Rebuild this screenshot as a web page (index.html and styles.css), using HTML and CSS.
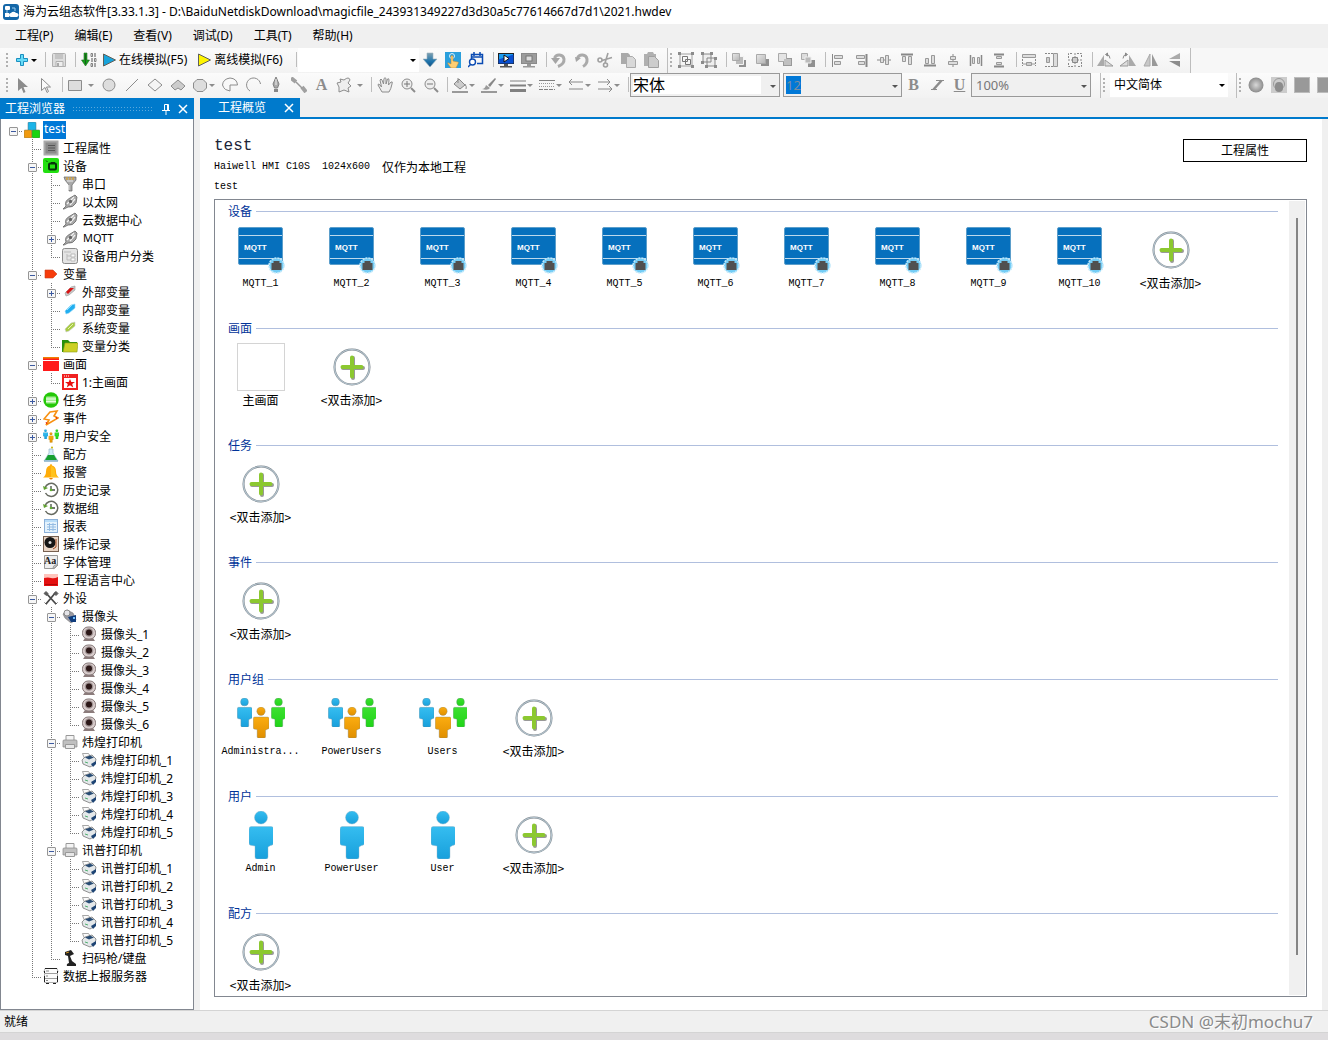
FILE: index.html
```html
<!DOCTYPE html>
<html lang="zh-CN">
<head>
<meta charset="utf-8">
<title>海为云组态软件</title>
<link rel="stylesheet" href="styles.css">
</head>
<body>
<svg class="defs" aria-hidden="true">
<defs>
<linearGradient id="gBlue" x1="0" y1="0" x2="0" y2="1"><stop offset="0" stop-color="#35bdf0"/><stop offset="1" stop-color="#18a0dc"/></linearGradient>
<linearGradient id="gGreen" x1="0" y1="0" x2="0" y2="1"><stop offset="0" stop-color="#3ce030"/><stop offset="1" stop-color="#20d418"/></linearGradient>
<linearGradient id="gOrange" x1="0" y1="0" x2="0" y2="1"><stop offset="0" stop-color="#fbac10"/><stop offset="1" stop-color="#e08f00"/></linearGradient>
<linearGradient id="gGray" x1="0" y1="0" x2="1" y2="1"><stop offset="0" stop-color="#e8e8e8"/><stop offset="1" stop-color="#b4b4b4"/></linearGradient>
<linearGradient id="gDown" x1="0" y1="0" x2="0" y2="1"><stop offset="0" stop-color="#7fa0b0"/><stop offset=".6" stop-color="#1e74ac"/><stop offset="1" stop-color="#124e80"/></linearGradient>
<radialGradient id="gBall"><stop offset="0" stop-color="#d8d8d8"/><stop offset="1" stop-color="#8c8c8c"/></radialGradient>
</defs>
<symbol id="app" viewBox="0 0 16 16"><rect width="16" height="16" rx="3" fill="#1467a8"/><rect x="2" y="2" width="5" height="4" rx="1" fill="#fff"/><rect x="2" y="9" width="4" height="4" fill="#fff"/><path d="M9 4h3v3M4 6v3M6 11h3" stroke="#9fd0f0" fill="none"/><path d="M8 13a2 2 0 0 1 0-4 3 3 0 0 1 5 0 2 2 0 0 1 1 4z" fill="#fff"/></symbol>
<symbol id="caret" viewBox="0 0 8 8"><path d="M1 3h6L4 6z" fill="currentColor"/></symbol>
<symbol id="plus" viewBox="0 0 16 16"><path d="M6.500 2.500h3v4h4v3h-4v4h-3v-4h-4v-3h4z" fill="#67dcf8" stroke="#1b8fc0"/></symbol>
<symbol id="save" viewBox="0 0 16 16"><path d="M2.500 1.500h11a1 1 0 0 1 1 1v12h-13v-12a1 1 0 0 1 1-1z" fill="#ddd" stroke="#b0b0b0"/><path d="M4 2h8v5H4z" fill="#c4c4c4"/><path d="M5 9.500h7v5H5z" fill="#eee" stroke="#b0b0b0"/><path d="M6 11h2v3H6z" fill="#aaa"/></symbol>
<symbol id="compile" viewBox="0 0 16 16"><path d="M3 1h3v7h2.500l-4 6-4-6H3z" fill="#13a019" stroke="#226b22" stroke-width=".6"/><path d="M4.500 2v10" stroke="#1d5a20"/><path d="M10 1.500h1.500v3H10zM10 11.500h1.500v3H10zM13.500 6.500H15v3h-1.500z" fill="none" stroke="#666" stroke-width=".8"/><path d="M14 1v4M14 11v4M11 6v4" stroke="#555"/></symbol>
<symbol id="playB" viewBox="0 0 16 16"><path d="M2.500 2l12 6-12 6z" fill="#18a4dc" stroke="#60605a"/></symbol>
<symbol id="playY" viewBox="0 0 16 16"><path d="M2.500 2l12 6-12 6z" fill="#fff500" stroke="#60605a"/></symbol>
<symbol id="down" viewBox="0 0 16 16"><path d="M5 1h6v6h4l-7 8-7-8h4z" fill="url(#gDown)" stroke="#9ab4c0" stroke-width=".6"/></symbol>
<symbol id="touch" viewBox="0 0 16 16"><rect width="16" height="16" fill="#2a9fdc"/><circle cx="7" cy="4" r="2.500" fill="none" stroke="#d7f0ff"/><path d="M6 4q1-1 2 0v5l5 1q1 0 0 2l-2 4H6l-3-4q-1-2 1-1l2 1z" fill="#ffcf73" stroke="#b88230" stroke-width=".5"/></symbol>
<symbol id="find" viewBox="0 0 16 16"><path d="M3.500 9V2.500h11v9H9M3.500 5h11M6 0v4M12 0v4" fill="none" stroke="#0b4bb3" stroke-width="1.500"/><circle cx="4.500" cy="10" r="3" fill="#fff" stroke="#0b4bb3" stroke-width="1.400"/><path d="M2.500 12.500L0 15" stroke="#0b4bb3" stroke-width="1.500"/></symbol>
<symbol id="monOn" viewBox="0 0 16 16"><rect x=".5" y="1.500" width="15" height="10" fill="#1b9cf2" stroke="#222"/><path d="M.5 11.500v-4l15-5v9z" fill="#0a4fd0"/><path d="M6 3l5 3.500L6 10z" fill="#fff" stroke="#111"/><path d="M6 12h4v2h4v1.500H2V14h4z" fill="#555"/></symbol>
<symbol id="monOff" viewBox="0 0 16 16"><rect x=".5" y="1.500" width="15" height="10" fill="#9c9c9c" stroke="#8a8a8a"/><rect x="5" y="4" width="6" height="5" fill="#ddd" stroke="#777"/><path d="M6 12h4v2h4v1.500H2V14h4z" fill="#999"/></symbol>
<symbol id="undo" viewBox="0 0 16 16"><path d="M7 14.500Q13.500 12 13 7A5 5 0 0 0 3.500 6" fill="none" stroke="#aaa" stroke-width="3"/><path d="M0 6h9l-4.500 6z" fill="#a5a5a5"/></symbol>
<symbol id="redo" viewBox="0 0 16 16"><path d="M9 14.500Q13.500 12 13 7A5 5 0 0 0 3.500 6" fill="none" stroke="#aaa" stroke-width="3"/><path d="M1 5l6 1-5 4z" fill="#a5a5a5"/></symbol>
<symbol id="cut" viewBox="0 0 16 16"><g fill="none" stroke="#a0a0a0" stroke-width="1.600"><circle cx="3" cy="8" r="2"/><circle cx="8.500" cy="13" r="2"/><path d="M5 8.500l10-3M8 11l3-10"/></g></symbol>
<symbol id="copy" viewBox="0 0 16 16"><path d="M1 1h7l2 2v9H1z" fill="#aaa"/><path d="M6.500 4.500h6l3 3v8h-9z" fill="#d8d8d8" stroke="#aaa"/></symbol>
<symbol id="paste" viewBox="0 0 16 16"><path d="M1 2h3l1-2h5l1 2h2v12H1z" fill="#b0b0b0"/><path d="M5.500 4.500h6l4 4v7h-10z" fill="#ccc" stroke="#a0a0a0"/></symbol>
<symbol id="group" viewBox="0 0 16 16"><path d="M2 2h12v12H2z" fill="none" stroke="#a0a0a0"/><path d="M4.500 4.500h5v5h-5zM7.500 7.500h5v5h-5z" fill="none" stroke="#777"/><path d="M0 0h3v3H0zM13 0h3v3h-3zM0 13h3v3H0zM13 13h3v3h-3z" fill="#8c8c8c"/></symbol>
<symbol id="ungroup" viewBox="0 0 16 16"><path d="M2 2h8v8H2zM6 6h8v8H6z" fill="#eee" stroke="#888"/><path d="M0 0h3v3H0zM9 0h3v3H9zM0 9h3v3H0zM13 5h3v3h-3zM4 13h3v3H4zM13 13h3v3h-3z" fill="#8c8c8c"/></symbol>
<symbol id="layA" viewBox="0 0 16 16"><path d="M8 8h7v7H8z" fill="#909090"/><path d="M4.500 4.500h8v8h-8z" fill="#bbb" stroke="#f4f4f4"/><path d="M1.500 1.500h7v7h-7z" fill="url(#gGray)" stroke="#aaa"/></symbol>
<symbol id="layB" viewBox="0 0 16 16"><path d="M7 7h8v7H7z" fill="#909090"/><path d="M2.500 2.500h9v9h-9z" fill="url(#gGray)" stroke="#aaa"/></symbol>
<symbol id="layC" viewBox="0 0 16 16"><path d="M6 6h9v8H6z" fill="#999"/><path d="M1.500 1.500h8v8h-8z" fill="#e4e4e4" stroke="#aaa"/><path d="M7 7h7v6H7z" fill="#c0c0c0"/></symbol>
<symbol id="layD" viewBox="0 0 16 16"><path d="M1.500 1.500h6v6h-6z" fill="#ddd" stroke="#aaa"/><path d="M8 8h7v7H8z" fill="#909090"/><path d="M5 5h6v6H5z" fill="#bbb" stroke="#eee"/></symbol>
<symbol id="alL" viewBox="0 0 16 16"><path d="M2.500 2v13" stroke="#888"/><path d="M4.500 3.500h8v3h-8zM4.500 9.500h6v3h-6z" fill="#ddd" stroke="#999"/></symbol>
<symbol id="alR" viewBox="0 0 16 16"><path d="M13.500 2v13" stroke="#888" stroke-width="2"/><path d="M3.500 3.500h8v3h-8zM5.500 9.500h6v3h-6z" fill="#ddd" stroke="#999"/></symbol>
<symbol id="alC" viewBox="0 0 16 16"><path d="M1 8h14" stroke="#888"/><path d="M4.500 5.500h3v5h-3zM9.500 3.500h3v9h-3z" fill="#ddd" stroke="#999"/></symbol>
<symbol id="alT" viewBox="0 0 16 16"><path d="M2 2.500h12" stroke="#888" stroke-width="2"/><path d="M3.500 4.500h3v5h-3zM9.500 4.500h3v8h-3z" fill="#ddd" stroke="#999"/></symbol>
<symbol id="alB" viewBox="0 0 16 16"><path d="M2 13.500h12" stroke="#888" stroke-width="2"/><path d="M3.500 6.500h3v5h-3zM9.500 3.500h3v8h-3z" fill="#ddd" stroke="#999"/></symbol>
<symbol id="alM" viewBox="0 0 16 16"><path d="M8 2v13" stroke="#888"/><path d="M5.500 4.500h5v3h-5zM3.500 9.500h9v3h-9z" fill="#ddd" stroke="#999"/></symbol>
<symbol id="spH" viewBox="0 0 16 16"><path d="M2.500 3v11M13.500 3v11" stroke="#888" stroke-width="1.500"/><path d="M4.500 5.500h2v6h-2zM9.500 5.500h2v6h-2z" fill="#ddd" stroke="#999"/></symbol>
<symbol id="spV" viewBox="0 0 16 16"><path d="M3 2.500h10M3 14.500h10" stroke="#888" stroke-width="2"/><path d="M5.500 4.500h5v2h-5zM5.500 10.500h5v2h-5z" fill="#ddd" stroke="#999"/></symbol>
<symbol id="szW" viewBox="0 0 16 16"><path d="M1.500 2.500h13v3h-13z" fill="#ddd" stroke="#999"/><path d="M1.500 7v7M14.500 7v7" stroke="#888" stroke-dasharray="2 1"/><path d="M5.500 10.500h5v3h-5zM2 12h3M11 12h3" fill="#ccc" stroke="#999"/></symbol>
<symbol id="szH" viewBox="0 0 16 16"><path d="M9.500 1.500h4v13h-4z" fill="#ddd" stroke="#999"/><path d="M1 1.500h8M1 14.500h8" stroke="#888" stroke-dasharray="2 1"/><path d="M2.500 5.500h3v5h-3z" fill="#ccc" stroke="#999"/></symbol>
<symbol id="szB" viewBox="0 0 16 16"><path d="M1.500 6V1.500H6M10 1.500h4.500V6M14.500 10v4.500H10M6 14.500H1.500V10M8 1v14M1 8h14" fill="none" stroke="#888" stroke-dasharray="2 1"/><path d="M5.500 5.500h5v5h-5z" fill="#ccc" stroke="#888"/></symbol>
<symbol id="rotL" viewBox="0 0 16 16"><path d="M0 14L7 3v11z" fill="#aaa"/><path d="M8 14V8l8 6z" fill="#ddd" stroke="#999"/><path d="M9 2.500q4 0 4 4M8.500 2.500l2-1.500v3z" fill="none" stroke="#888"/></symbol>
<symbol id="rotR" viewBox="0 0 16 16"><path d="M16 14L9 3v11z" fill="#aaa"/><path d="M8 14V8l-8 6z" fill="#ddd" stroke="#999"/><path d="M7 2.500q-4 0-4 4M7.500 2.500l-2-1.500v3z" fill="none" stroke="#888"/></symbol>
<symbol id="flipH" viewBox="0 0 16 16"><path d="M1 14L7 2v12z" fill="#c8c8c8" stroke="#aaa"/><path d="M15 14L9 2v12z" fill="#999"/></symbol>
<symbol id="flipV" viewBox="0 0 16 16"><path d="M14 1L3 7h11z" fill="#aaa"/><path d="M14 15L3 9h11z" fill="#8c8c8c"/></symbol>
<symbol id="curF" viewBox="0 0 16 16"><path d="M3 1v13l3.500-3 2 5 2-1-2-5H13z" fill="#8c8c8c"/></symbol>
<symbol id="curO" viewBox="0 0 16 16"><path d="M3.500 1.500v12L7 10.500l2 5 1.500-1-2-4.500h4z" fill="#fafafa" stroke="#8c8c8c"/></symbol>
<symbol id="rect" viewBox="0 0 16 16"><path d="M1.500 3.500h13v10h-13z" fill="#ddd" stroke="#8c8c8c"/></symbol>
<symbol id="circ" viewBox="0 0 16 16"><circle cx="8" cy="8" r="6" fill="#ddd" stroke="#8c8c8c"/></symbol>
<symbol id="line" viewBox="0 0 16 16"><path d="M2 14L14 2" stroke="#8c8c8c"/></symbol>
<symbol id="dia" viewBox="0 0 16 16"><path d="M1 8l7-6 7 6-7 6z" fill="#f4f4f4" stroke="#8c8c8c"/></symbol>
<symbol id="diaF" viewBox="0 0 16 16"><path d="M1 9l7-6 7 6-4 4-3-2-3 2z" fill="#ccc" stroke="#8c8c8c"/></symbol>
<symbol id="oct" viewBox="0 0 16 16"><path d="M5 2.500h6l3.500 3.500v5L11 14.500H5L1.500 11V6z" fill="#ddd" stroke="#8c8c8c"/></symbol>
<symbol id="pie" viewBox="0 0 16 16"><path d="M8 8h7.500Q15 1.500 8 1 1 2 .5 8q1 3 3 4.500L8 14z" fill="#f8f8f8" stroke="#8c8c8c"/></symbol>
<symbol id="arc" viewBox="0 0 16 16"><path d="M5 14A7 7 0 1 1 15.500 7" fill="none" stroke="#8c8c8c"/></symbol>
<symbol id="pen" viewBox="0 0 16 16"><path d="M8 0l3 7-1.500 4h-3L5 7z" fill="#aaa" stroke="#808080"/><path d="M6 12h4v3H6z" fill="#888"/><path d="M8 2v6" stroke="#eee"/></symbol>
<symbol id="pipe" viewBox="0 0 16 16"><path d="M0 1l5 4M11 10l4 5" stroke="#a0a0a0" stroke-width="4"/><path d="M5 5l6 6" stroke="#999" stroke-width="1.500"/></symbol>
<symbol id="star" viewBox="0 0 16 16"><path d="M8 3q5-4 6 0l-2 3 3 3-3 2 1 4-5-2-5 2v-5L1 6l4-1-1-3z" fill="#eee" stroke="#8c8c8c"/></symbol>
<symbol id="hand" viewBox="0 0 16 16"><path d="M5 15L1 8q0-2 2 0l1.500 2L3 3q1-2 2 0l1.500 4L7 1.500q1-1.500 2 0V7l1.500-5q1.500-1 1.500 1l-.5 5L14 5q2-1 1 2-1 5-3 8z" fill="#eee" stroke="#8c8c8c"/></symbol>
<symbol id="zin" viewBox="0 0 16 16"><circle cx="7" cy="7" r="5" fill="#eee" stroke="#8c8c8c"/><path d="M4 7h6M7 4v6" stroke="#777"/><path d="M11 11l4 4" stroke="#8c8c8c" stroke-width="2"/></symbol>
<symbol id="zout" viewBox="0 0 16 16"><circle cx="7" cy="7" r="5" fill="#eee" stroke="#8c8c8c"/><path d="M4 7h6" stroke="#777"/><path d="M11 11l4 4" stroke="#8c8c8c" stroke-width="2"/></symbol>
<symbol id="fill" viewBox="0 0 16 16"><path d="M2 7l5-5 6 6-5 4z" fill="#ccc" stroke="#888"/><path d="M6 6V1M13 7q2 3 1 5" stroke="#888" fill="none"/><path d="M0 14h16v2H0z" fill="#999"/></symbol>
<symbol id="brush" viewBox="0 0 16 16"><path d="M1 12q3 0 4-4l4 3q-2 3-8 1z" fill="#999"/><path d="M7 8l7-7 1 1-6 8z" fill="#888"/><path d="M0 14h16v2H0z" fill="#999"/></symbol>
<symbol id="lw" viewBox="0 0 16 16"><path d="M0 4h16" stroke="#808080"/><path d="M0 8.500h16" stroke="#808080" stroke-width="2"/><path d="M0 13.500h16" stroke="#808080" stroke-width="3"/></symbol>
<symbol id="ld" viewBox="0 0 16 16"><path d="M0 3.500h16" stroke="#808080"/><path d="M0 6.500h16M0 9.500h16" stroke="#999" stroke-dasharray="1 1"/><path d="M0 12.500h16" stroke="#808080" stroke-dasharray="4 1"/></symbol>
<symbol id="arL" viewBox="0 0 16 16"><path d="M1 5h14M4 2L1 5l3 3M1 12h14" fill="none" stroke="#888"/></symbol>
<symbol id="arR" viewBox="0 0 16 16"><path d="M1 5h12M10 2l3 3-3 3M1 12h14M12 9l3 3-3 3" fill="none" stroke="#888"/></symbol>
<symbol id="ital" viewBox="0 0 16 16"><path d="M7 3.500h8M2 12.500h6" stroke="#8c8c8c"/><path d="M12.500 3.500l-8 9" stroke="#8c8c8c" stroke-width="2.500"/></symbol>
<symbol id="ball" viewBox="0 0 16 16"><circle cx="8" cy="8" r="7.500" fill="url(#gBall)"/></symbol>
<symbol id="cam" viewBox="0 0 16 16"><rect width="16" height="16" fill="#ccc"/><circle cx="8" cy="7" r="5.500" fill="#ccc" stroke="#999"/><rect x="4" y="5" width="8" height="10" rx="4" fill="#8c8c8c"/></symbol>
<symbol id="sq" viewBox="0 0 16 16"><rect x=".5" y=".5" width="15" height="15" fill="#999" stroke="#bbb"/></symbol>
<symbol id="pin" viewBox="0 0 10 12"><path d="M3.500 7V1.500h4V7M1 7.500h8M5 8v4M6.500 1v6" fill="none" stroke="#fff"/></symbol>
<symbol id="x" viewBox="0 0 10 10"><path d="M1 1l8 8M9 1L1 9" stroke="currentColor" stroke-width="1.500"/></symbol>
<symbol id="root" viewBox="0 0 16 16"><rect x="4" width="8" height="9" rx="1" fill="#1cb4e8" stroke="#55707c" stroke-width=".5"/><rect y="8" width="8" height="8" rx="1" fill="#f09a10" stroke="#775" stroke-width=".5"/><rect x="8" y="8" width="8" height="8" rx="1" fill="#18d410" stroke="#575" stroke-width=".5"/></symbol>
<symbol id="attr" viewBox="0 0 16 16"><rect x="1.500" y="1.500" width="13" height="13" fill="#8a8a8a" stroke="#aaa" stroke-width="2"/><path d="M5 5.500h7M5 8h7M5 10.500h7" stroke="#555"/></symbol>
<symbol id="dev" viewBox="0 0 16 16"><rect width="16" height="15" rx="2" fill="#22e010"/><rect x="6" y="5.500" width="7" height="6" rx="1" fill="none" stroke="#05330a" stroke-width="2"/><path d="M3 2.500l1.500 1.500M8 4.500h4" stroke="#05330a" fill="none"/></symbol>
<symbol id="serial" viewBox="0 0 16 16"><path d="M2 1h12v3l-4 5v6H7V9L3 4z" fill="#aaa" stroke="#666" stroke-width=".7"/><path d="M5 1v3M8 1v3M11 1v3" stroke="#d0a040" stroke-width="1.500"/><path d="M5 5h6M7 9v5" stroke="#eee"/></symbol>
<symbol id="plug" viewBox="0 0 16 16"><path d="M1 15l3-3Q2 7 8 4l5-3 2 2-1 6q-3 5-8 4l-4 2z" fill="#a8a8a8" stroke="#666" stroke-width=".8"/><path d="M5 10l7-7M8 11l5-6" stroke="#f4f4f4" stroke-width="1.200"/><circle cx="8.500" cy="7.500" r="1.700" fill="#666"/></symbol>
<symbol id="cls" viewBox="0 0 16 16"><rect x=".5" y=".5" width="15" height="15" rx="2" fill="#e4e4e4" stroke="#8a8a8a"/><path d="M2 4h7M5 6v6h4M5 8h4" stroke="#bbb" fill="none"/><path d="M9 6h4v3H9zM9 10h4v3H9z" fill="#fafafa" stroke="#bbb"/></symbol>
<symbol id="tagR" viewBox="0 0 16 16"><path d="M2 4h8l4 4-4 4H2z" fill="#f63c0c" stroke="#c84020" stroke-width=".6"/></symbol>
<symbol id="vR" viewBox="0 0 16 16"><path d="M3 9l6-6 4-1v4l-6 5-3 1z" fill="#c8c8c8" stroke="#999" stroke-width=".6"/><path d="M4 8l4-4 4 0-6 6z" fill="#d81414"/></symbol>
<symbol id="vB" viewBox="0 0 16 16"><path d="M3 9l6-6 4-1v4l-6 5-3 1z" fill="#22aef0" stroke="#8fd8f8" stroke-width=".6"/><path d="M5 8l5-5" stroke="#8fe0ff"/></symbol>
<symbol id="vG" viewBox="0 0 16 16"><path d="M3 9l6-6 4-1v4l-6 5-3 1z" fill="#a8cc44" stroke="#ccc" stroke-width=".6"/><path d="M6 9l5-5" stroke="#e8f0b0"/></symbol>
<symbol id="folder" viewBox="0 0 16 16"><path d="M0 2h6l2 2h7v10H0z" fill="#28900a"/><path d="M3 5h13l-1 9H1z" fill="#ccd024" stroke="#8ea018" stroke-width=".6"/></symbol>
<symbol id="scr" viewBox="0 0 16 16"><path d="M0 1h16v14H0z" fill="#ff1a1a"/><path d="M0 1h16v1.500H0z" fill="#f08000"/><path d="M0 4.500h16" stroke="#fff"/></symbol>
<symbol id="scrS" viewBox="0 0 16 16"><path d="M1 1h14v14H1z" fill="#fff" stroke="#f02020" stroke-width="2"/><path d="M0 0h16v4H0z" fill="#f02020"/><path d="M2 2h5" stroke="#fff" stroke-dasharray="1 1"/><path d="M8 5l1.300 3H13l-2.800 2 1 3.500L8 11.300l-3.200 2.200 1-3.500L3 8h3.700z" fill="#e81010"/></symbol>
<symbol id="task" viewBox="0 0 16 16"><circle cx="8" cy="8" r="7.700" fill="#24c808"/><rect x="3" y="4.500" width="10" height="7" rx="1" fill="#a8ec98"/><path d="M3 7h10M3 9.500h10" stroke="#e8ffe0"/></symbol>
<symbol id="event" viewBox="0 0 16 16"><path d="M7 2l7-1-3 5 4 2L3 15l3-5-5-1z" fill="#fff" stroke="#f89010" stroke-width="1.600"/><path d="M13 7l1 2M3 12l1 2" stroke="#e02010"/></symbol>
<symbol id="person" viewBox="0 0 24 48"><circle cx="12" cy="6.500" r="6.500"/><path d="M2 15.500h20a2.500 2.500 0 0 1 2.500 2.500v14q0 2-3 2.500L19 36v10q0 2-2 2H8q-2 0-2-2V35l-3-.5q-3 0-3-2.500V18q0-2.500 2-2.500z"/></symbol>
<symbol id="users" viewBox="0 0 48 48"><g stroke="#6d7d84" stroke-width=".5"><use href="#person" x="0" y="4" width="15" height="29" fill="url(#gBlue)"/><use href="#person" x="34" y="4" width="15" height="29" fill="url(#gGreen)"/><use href="#person" x="16" y="13" width="16" height="31" fill="url(#gOrange)"/></g></symbol>
<symbol id="user" viewBox="0 0 48 48"><use href="#person" x="12" y="0" width="24" height="48" fill="url(#gBlue)" stroke="#8fb4c4" stroke-width=".4"/></symbol>
<symbol id="recipe" viewBox="0 0 16 16"><path d="M6 3h4v4l5 8H1l5-8z" fill="#d4ecf8" stroke="#9ab8c8" stroke-width=".7"/><path d="M5 9h6l3 5H2z" fill="#18a030"/><circle cx="9" cy="1.500" r="1" fill="#c8b400"/><path d="M1 15h14" stroke="#6aa0c0"/></symbol>
<symbol id="bell" viewBox="0 0 16 16"><path d="M8 0q1 0 1 1.500 4 1 4 6 0 4 3 6H0q3-2 3-6 0-5 4-6Q7 0 8 0z" fill="#ffac08"/><path d="M8 2q4 1 4 6 0 4 3 5H8z" fill="#ffc21c"/><path d="M6 14h4q-2 3-4 0z" fill="#e88000"/></symbol>
<symbol id="hist" viewBox="0 0 16 16"><path d="M2 6a6.500 6.500 0 1 1 .5 5" fill="none" stroke="#666a60" stroke-width="1.500"/><path d="M0 4l1 4 4-2z" fill="#60a030"/><path d="M8 4v4h4" fill="none" stroke="#445040" stroke-width="1.300"/><circle cx="8" cy="8" r="1.300" fill="#60b030"/></symbol>
<symbol id="report" viewBox="0 0 16 16"><rect x="1.500" y="1.500" width="13" height="13" fill="#e4f2fc" stroke="#8cb0d8"/><path d="M2 3h12" stroke="#b8dcf8" stroke-width="2"/><path d="M4 6.500h9M4 9h9M4 11.500h9M6.500 5v8M10 5v8" stroke="#94bce4"/></symbol>
<symbol id="oplog" viewBox="0 0 16 16"><rect x=".5" y=".5" width="15" height="15" fill="#e8d4c4" stroke="#776050"/><circle cx="7" cy="6.500" r="5.500" fill="#151515"/><circle cx="7" cy="6.500" r="1.500" fill="#ddd"/><path d="M13 3v8l-3 2" stroke="#a04820" fill="none"/></symbol>
<symbol id="font" viewBox="0 0 16 16"><path d="M1.500 1.500h13v10l-3 3h-10z" fill="#eee" stroke="#999"/><path d="M15 11q-5-1-5 4z" fill="#ccc" stroke="#999"/></symbol>
<symbol id="lang" viewBox="0 0 16 16"><path d="M1 2h14v5H1z" fill="#ffc4bc"/><path d="M1 6q4-1 7 0t7-1v9H1z" fill="#e41010"/><path d="M2 12.500h12" stroke="#b00808"/></symbol>
<symbol id="tools" viewBox="0 0 16 16"><path d="M3 3l10 11M13 2L3 14" stroke="#4a4a4a" stroke-width="1.800"/><path d="M1 3.500l2-2 2 2-1.500 2zM11 3.500l2-2 2 2-2 2zM1.500 12.500l2 2M14.500 12.500l-2 2" fill="#5c5c5c" stroke="#5c5c5c"/></symbol>
<symbol id="camera" viewBox="0 0 16 16"><path d="M1 6l4-4 6 3 3 7-5 3-6-5z" fill="#9c9ca4" stroke="#777" stroke-width=".6"/><circle cx="5" cy="5" r="3" fill="#e4e4e8" stroke="#888"/><path d="M6 9l8-2v7H9z" fill="#103c7c"/><path d="M11 9h2v2h-2z" fill="#70c0ff"/></symbol>
<symbol id="webcam" viewBox="0 0 16 16"><path d="M4 12h8l2 3H2z" fill="#8c7c7c"/><rect x="1.500" y="1" width="13" height="12" rx="5.500" fill="#d8cccc" stroke="#857878"/><circle cx="8" cy="6.500" r="4.300" fill="#a09494"/><circle cx="8" cy="6.500" r="3" fill="#2c1818"/></symbol>
<symbol id="prn" viewBox="0 0 16 16"><path d="M4 6V1.500h8V6" fill="#f4f4f4" stroke="#999"/><path d="M1 7q0-1 1-1h12q1 0 1 1v6H1z" fill="#c0c0c0" stroke="#888" stroke-width=".7"/><path d="M3.500 10.500h9v4h-9z" fill="#e8e8e8" stroke="#999"/></symbol>
<symbol id="prn2" viewBox="0 0 16 16"><path d="M1.500 1.500h6l2 3-6 2z" fill="#fafafa" stroke="#909090" stroke-width=".8"/><path d="M1 8l3-3 7-2 4 4-1 5-5 3-7-3z" fill="#e4e8ea" stroke="#777" stroke-width=".8"/><path d="M4 5.500l5-2 4 2-5 2z" fill="#284c74"/><path d="M10 12l5-3v3l-3 3z" fill="#1e4474"/><path d="M4 10l3 1" stroke="#50b070"/></symbol>
<symbol id="scan" viewBox="0 0 16 16"><path d="M3 2l6-2 3 4-4 2 2 5 4 3v2H5q-1-2 2-3L6 6 3 5z" fill="#222"/><path d="M4 3l3-1" stroke="#cc9020"/></symbol>
<symbol id="server" viewBox="0 0 16 16"><path d="M2 .5h12l1 3-1 2H2l-1-2zM1.500 5.500h13v5h-13zM1.500 10.500h13v4h-13z" fill="#fbfbfb" stroke="#999" stroke-width=".8"/><path d="M2 .5h12M1.500 3v2M14.500 3v2M1.500 8v6M14.500 8v6M3 15.500h3M10 15.500h3" stroke="#222"/><path d="M3 3h3M3 8h2M3 12.500h2" stroke="#888"/></symbol>
<symbol id="add" viewBox="0 0 48 48"><circle cx="24" cy="24" r="17.500" fill="#fff" stroke="#7c858c" stroke-width="2"/><circle cx="24" cy="24" r="17.500" fill="none" stroke="#b4c4ce" stroke-width="1.200"/><path d="M25 15v20M15 25h20" stroke="#999" stroke-width="4" stroke-linecap="round"/><path d="M24 14.500v19M14.500 24h19" stroke="#8cc830" stroke-width="4" stroke-linecap="round"/></symbol>
<symbol id="mqtt" viewBox="0 0 48 48"><rect x="1.500" y="1.500" width="44" height="37" rx="1.500" fill="#0670bd" stroke="#5b9ecb"/><path d="M2 9.500h43M2 32.500h43" stroke="#bcd9ec"/><circle cx="39.500" cy="39.500" r="7.500" fill="#74cdf6" stroke="#c0e8fa" stroke-width="1.500" stroke-dasharray="2 1"/><path d="M34.500 44v-7h2v-2h6v2h2v7z" fill="#505050"/></symbol>
</svg>

<header class="title"><svg class="i"><use href="#app"/></svg><span>海为云组态软件[3.33.1.3] - D:\BaiduNetdiskDownload\magicfile_243931349227d3d30a5c77614667d7d1\2021.hwdev</span></header>
<nav class="menu"><button>工程(P)</button><button>编辑(E)</button><button>查看(V)</button><button>调试(D)</button><button>工具(T)</button><button>帮助(H)</button></nav>

<div class="bars">
<div class="bar">
<div class="group"><i class="grip"></i>
<button class="tb drop" aria-label="新建"><svg class="i"><use href="#plus"/></svg><svg class="c"><use href="#caret"/></svg></button><i class="sep"></i>
<button class="tb" aria-label="保存"><svg class="i"><use href="#save"/></svg></button><i class="sep"></i>
<button class="tb" aria-label="编译"><svg class="i"><use href="#compile"/></svg></button>
<button class="tb wide"><svg class="i"><use href="#playB"/></svg>在线模拟(F5)</button>
<button class="tb wide"><svg class="i"><use href="#playY"/></svg>离线模拟(F6)</button><i class="sep"></i>
<div class="combo flat device"><select aria-label="设备"><option></option></select><svg class="c"><use href="#caret"/></svg></div>
<button class="tb" aria-label="下载"><svg class="i"><use href="#down"/></svg></button>
<button class="tb" aria-label="触摸"><svg class="i"><use href="#touch"/></svg></button>
<button class="tb" aria-label="查找"><svg class="i"><use href="#find"/></svg></button><i class="sep"></i>
<button class="tb" aria-label="运行"><svg class="i"><use href="#monOn"/></svg></button>
<button class="tb" aria-label="停止"><svg class="i"><use href="#monOff"/></svg></button><i class="sep"></i>
<button class="tb" aria-label="撤销"><svg class="i"><use href="#undo"/></svg></button>
<button class="tb" aria-label="重做"><svg class="i"><use href="#redo"/></svg></button>
<button class="tb" aria-label="剪切"><svg class="i"><use href="#cut"/></svg></button>
<button class="tb" aria-label="复制"><svg class="i"><use href="#copy"/></svg></button>
<button class="tb" aria-label="粘贴"><svg class="i"><use href="#paste"/></svg></button></div>
<div class="group"><i class="grip"></i>
<button class="tb" aria-label="组合"><svg class="i"><use href="#group"/></svg></button>
<button class="tb" aria-label="取消组合"><svg class="i"><use href="#ungroup"/></svg></button><i class="sep"></i>
<button class="tb" aria-label="置顶"><svg class="i"><use href="#layA"/></svg></button>
<button class="tb" aria-label="置底"><svg class="i"><use href="#layB"/></svg></button>
<button class="tb" aria-label="上移"><svg class="i"><use href="#layC"/></svg></button>
<button class="tb" aria-label="下移"><svg class="i"><use href="#layD"/></svg></button><i class="sep"></i>
<button class="tb" aria-label="左对齐"><svg class="i"><use href="#alL"/></svg></button>
<button class="tb" aria-label="右对齐"><svg class="i"><use href="#alR"/></svg></button>
<button class="tb" aria-label="水平居中"><svg class="i"><use href="#alC"/></svg></button>
<button class="tb" aria-label="上对齐"><svg class="i"><use href="#alT"/></svg></button>
<button class="tb" aria-label="下对齐"><svg class="i"><use href="#alB"/></svg></button>
<button class="tb" aria-label="垂直居中"><svg class="i"><use href="#alM"/></svg></button>
<button class="tb" aria-label="横向分布"><svg class="i"><use href="#spH"/></svg></button>
<button class="tb" aria-label="纵向分布"><svg class="i"><use href="#spV"/></svg></button><i class="sep"></i>
<button class="tb" aria-label="等宽"><svg class="i"><use href="#szW"/></svg></button>
<button class="tb" aria-label="等高"><svg class="i"><use href="#szH"/></svg></button>
<button class="tb" aria-label="等大小"><svg class="i"><use href="#szB"/></svg></button><i class="sep"></i>
<button class="tb" aria-label="左旋"><svg class="i"><use href="#rotL"/></svg></button>
<button class="tb" aria-label="右旋"><svg class="i"><use href="#rotR"/></svg></button>
<button class="tb" aria-label="水平翻转"><svg class="i"><use href="#flipH"/></svg></button>
<button class="tb" aria-label="垂直翻转"><svg class="i"><use href="#flipV"/></svg></button></div>
</div>
<div class="bar gray">
<div class="group"><i class="grip"></i>
<button class="tb" aria-label="选择"><svg class="i"><use href="#curF"/></svg></button>
<button class="tb" aria-label="节点"><svg class="i"><use href="#curO"/></svg></button><i class="sep"></i>
<button class="tb drop far" aria-label="矩形"><svg class="i"><use href="#rect"/></svg><svg class="c"><use href="#caret"/></svg></button>
<button class="tb" aria-label="圆"><svg class="i"><use href="#circ"/></svg></button>
<button class="tb" aria-label="直线"><svg class="i"><use href="#line"/></svg></button>
<button class="tb" aria-label="折线"><svg class="i"><use href="#dia"/></svg></button>
<button class="tb" aria-label="多边形"><svg class="i"><use href="#diaF"/></svg></button>
<button class="tb drop" aria-label="正多边形"><svg class="i"><use href="#oct"/></svg><svg class="c"><use href="#caret"/></svg></button>
<button class="tb" aria-label="扇形"><svg class="i"><use href="#pie"/></svg></button>
<button class="tb" aria-label="弧线"><svg class="i"><use href="#arc"/></svg></button>
<button class="tb" aria-label="钢笔"><svg class="i"><use href="#pen"/></svg></button>
<button class="tb" aria-label="管道"><svg class="i"><use href="#pipe"/></svg></button>
<button class="tb letter">A</button>
<button class="tb drop far" aria-label="形状"><svg class="i"><use href="#star"/></svg><svg class="c"><use href="#caret"/></svg></button><i class="sep"></i>
<button class="tb" aria-label="移动"><svg class="i"><use href="#hand"/></svg></button>
<button class="tb" aria-label="放大"><svg class="i"><use href="#zin"/></svg></button>
<button class="tb" aria-label="缩小"><svg class="i"><use href="#zout"/></svg></button><i class="sep"></i>
<button class="tb drop" aria-label="填充"><svg class="i"><use href="#fill"/></svg><svg class="c"><use href="#caret"/></svg></button>
<button class="tb drop" aria-label="线色"><svg class="i"><use href="#brush"/></svg><svg class="c"><use href="#caret"/></svg></button>
<button class="tb drop" aria-label="线宽"><svg class="i"><use href="#lw"/></svg><svg class="c"><use href="#caret"/></svg></button>
<button class="tb drop" aria-label="线型"><svg class="i"><use href="#ld"/></svg><svg class="c"><use href="#caret"/></svg></button>
<button class="tb drop" aria-label="起点箭头"><svg class="i"><use href="#arL"/></svg><svg class="c"><use href="#caret"/></svg></button>
<button class="tb drop" aria-label="终点箭头"><svg class="i"><use href="#arR"/></svg><svg class="c"><use href="#caret"/></svg></button><i class="sep"></i>
<div class="combo font"><input aria-label="字体" value="宋体"><svg class="c"><use href="#caret"/></svg></div>
<div class="combo size"><input aria-label="字号" value="12"><svg class="c"><use href="#caret"/></svg></div>
<button class="tb letter">B</button><button class="tb" aria-label="斜体"><svg class="i"><use href="#ital"/></svg></button><button class="tb letter"><u>U</u></button>
<div class="combo zoom"><select aria-label="缩放"><option>100%</option></select><svg class="c"><use href="#caret"/></svg></div></div>
<div class="group"><i class="grip"></i>
<div class="combo flat lang"><select aria-label="语言"><option>中文简体</option></select><svg class="c"><use href="#caret"/></svg></div></div>
<div class="group"><i class="grip"></i>
<button class="tb" aria-label="指示灯"><svg class="i"><use href="#ball"/></svg></button>
<button class="tb" aria-label="旋钮"><svg class="i"><use href="#cam"/></svg></button>
<button class="tb" aria-label="按钮"><svg class="i"><use href="#sq"/></svg></button>
<button class="tb" aria-label="开关"><svg class="i"><use href="#sq"/></svg></button></div>
</div>
</div>

<div class="work">
<aside class="side">
<div class="sidehead"><span>工程浏览器</span><i class="dots"></i><button aria-label="固定"><svg class="pin"><use href="#pin"/></svg></button><button aria-label="关闭"><svg class="x"><use href="#x"/></svg></button></div>
<ul class="tree">
<li><div class="row"><button class="tg" aria-label="折叠"></button><svg class="i"><use href="#root"/></svg><span class="sel">test</span></div>
<ul>
<li><div class="row"><svg class="i"><use href="#attr"/></svg><span>工程属性</span></div></li>
<li><div class="row"><button class="tg" aria-label="折叠"></button><svg class="i"><use href="#dev"/></svg><span>设备</span></div>
<ul>
<li><div class="row"><svg class="i"><use href="#serial"/></svg><span>串口</span></div></li>
<li><div class="row"><svg class="i"><use href="#plug"/></svg><span>以太网</span></div></li>
<li><div class="row"><svg class="i"><use href="#plug"/></svg><span>云数据中心</span></div></li>
<li><div class="row"><button class="tg more" aria-label="展开"></button><svg class="i"><use href="#plug"/></svg><span class="latin">MQTT</span></div></li>
<li><div class="row"><svg class="i"><use href="#cls"/></svg><span>设备用户分类</span></div></li>
</ul></li>
<li><div class="row"><button class="tg" aria-label="折叠"></button><svg class="i"><use href="#tagR"/></svg><span>变量</span></div>
<ul>
<li><div class="row"><button class="tg more" aria-label="展开"></button><svg class="i"><use href="#vR"/></svg><span>外部变量</span></div></li>
<li><div class="row"><svg class="i"><use href="#vB"/></svg><span>内部变量</span></div></li>
<li><div class="row"><svg class="i"><use href="#vG"/></svg><span>系统变量</span></div></li>
<li><div class="row"><svg class="i"><use href="#folder"/></svg><span>变量分类</span></div></li>
</ul></li>
<li><div class="row"><button class="tg" aria-label="折叠"></button><svg class="i"><use href="#scr"/></svg><span>画面</span></div>
<ul><li><div class="row"><svg class="i"><use href="#scrS"/></svg><span>1:主画面</span></div></li></ul></li>
<li><div class="row"><button class="tg more" aria-label="展开"></button><svg class="i"><use href="#task"/></svg><span>任务</span></div></li>
<li><div class="row"><button class="tg more" aria-label="展开"></button><svg class="i"><use href="#event"/></svg><span>事件</span></div></li>
<li><div class="row"><button class="tg more" aria-label="展开"></button><svg class="i"><use href="#users"/></svg><span>用户安全</span></div></li>
<li><div class="row"><svg class="i"><use href="#recipe"/></svg><span>配方</span></div></li>
<li><div class="row"><svg class="i"><use href="#bell"/></svg><span>报警</span></div></li>
<li><div class="row"><svg class="i"><use href="#hist"/></svg><span>历史记录</span></div></li>
<li><div class="row"><svg class="i"><use href="#hist"/></svg><span>数据组</span></div></li>
<li><div class="row"><svg class="i"><use href="#report"/></svg><span>报表</span></div></li>
<li><div class="row"><svg class="i"><use href="#oplog"/></svg><span>操作记录</span></div></li>
<li><div class="row"><svg class="i" viewBox="0 0 16 16"><use href="#font"/><text x="1" y="10" class="aa">Aa</text></svg><span>字体管理</span></div></li>
<li><div class="row"><svg class="i"><use href="#lang"/></svg><span>工程语言中心</span></div></li>
<li><div class="row"><button class="tg" aria-label="折叠"></button><svg class="i"><use href="#tools"/></svg><span>外设</span></div>
<ul>
<li><div class="row"><button class="tg" aria-label="折叠"></button><svg class="i"><use href="#camera"/></svg><span>摄像头</span></div>
<ul>
<li><div class="row"><svg class="i"><use href="#webcam"/></svg><span>摄像头_1</span></div></li>
<li><div class="row"><svg class="i"><use href="#webcam"/></svg><span>摄像头_2</span></div></li>
<li><div class="row"><svg class="i"><use href="#webcam"/></svg><span>摄像头_3</span></div></li>
<li><div class="row"><svg class="i"><use href="#webcam"/></svg><span>摄像头_4</span></div></li>
<li><div class="row"><svg class="i"><use href="#webcam"/></svg><span>摄像头_5</span></div></li>
<li><div class="row"><svg class="i"><use href="#webcam"/></svg><span>摄像头_6</span></div></li>
</ul></li>
<li><div class="row"><button class="tg" aria-label="折叠"></button><svg class="i"><use href="#prn"/></svg><span>炜煌打印机</span></div>
<ul>
<li><div class="row"><svg class="i"><use href="#prn2"/></svg><span>炜煌打印机_1</span></div></li>
<li><div class="row"><svg class="i"><use href="#prn2"/></svg><span>炜煌打印机_2</span></div></li>
<li><div class="row"><svg class="i"><use href="#prn2"/></svg><span>炜煌打印机_3</span></div></li>
<li><div class="row"><svg class="i"><use href="#prn2"/></svg><span>炜煌打印机_4</span></div></li>
<li><div class="row"><svg class="i"><use href="#prn2"/></svg><span>炜煌打印机_5</span></div></li>
</ul></li>
<li><div class="row"><button class="tg" aria-label="折叠"></button><svg class="i"><use href="#prn"/></svg><span>讯普打印机</span></div>
<ul>
<li><div class="row"><svg class="i"><use href="#prn2"/></svg><span>讯普打印机_1</span></div></li>
<li><div class="row"><svg class="i"><use href="#prn2"/></svg><span>讯普打印机_2</span></div></li>
<li><div class="row"><svg class="i"><use href="#prn2"/></svg><span>讯普打印机_3</span></div></li>
<li><div class="row"><svg class="i"><use href="#prn2"/></svg><span>讯普打印机_4</span></div></li>
<li><div class="row"><svg class="i"><use href="#prn2"/></svg><span>讯普打印机_5</span></div></li>
</ul></li>
<li><div class="row"><svg class="i"><use href="#scan"/></svg><span>扫码枪/键盘</span></div></li>
</ul></li>
<li><div class="row"><svg class="i"><use href="#server"/></svg><span>数据上报服务器</span></div></li>
</ul></li>
</ul>
</aside>

<div class="doc">
<div class="tabs"><div class="tab">工程概览<button aria-label="关闭标签"><svg class="x"><use href="#x"/></svg></button></div></div>
<main class="page">
<div class="head">
<div><h1>test</h1>
<p><span>Haiwell HMI C10S</span><span>1024x600</span><b>仅作为本地工程</b></p>
<p><span>test</span></p></div>
<button class="prop">工程属性</button>
</div>
<div class="box">
<div class="list">
<section><h2>设备</h2><div class="items">
<div class="item"><svg viewBox="0 0 48 48"><use href="#mqtt"/><text x="7" y="24" class="chip">MQTT</text></svg><span>MQTT_1</span></div>
<div class="item"><svg viewBox="0 0 48 48"><use href="#mqtt"/><text x="7" y="24" class="chip">MQTT</text></svg><span>MQTT_2</span></div>
<div class="item"><svg viewBox="0 0 48 48"><use href="#mqtt"/><text x="7" y="24" class="chip">MQTT</text></svg><span>MQTT_3</span></div>
<div class="item"><svg viewBox="0 0 48 48"><use href="#mqtt"/><text x="7" y="24" class="chip">MQTT</text></svg><span>MQTT_4</span></div>
<div class="item"><svg viewBox="0 0 48 48"><use href="#mqtt"/><text x="7" y="24" class="chip">MQTT</text></svg><span>MQTT_5</span></div>
<div class="item"><svg viewBox="0 0 48 48"><use href="#mqtt"/><text x="7" y="24" class="chip">MQTT</text></svg><span>MQTT_6</span></div>
<div class="item"><svg viewBox="0 0 48 48"><use href="#mqtt"/><text x="7" y="24" class="chip">MQTT</text></svg><span>MQTT_7</span></div>
<div class="item"><svg viewBox="0 0 48 48"><use href="#mqtt"/><text x="7" y="24" class="chip">MQTT</text></svg><span>MQTT_8</span></div>
<div class="item"><svg viewBox="0 0 48 48"><use href="#mqtt"/><text x="7" y="24" class="chip">MQTT</text></svg><span>MQTT_9</span></div>
<div class="item"><svg viewBox="0 0 48 48"><use href="#mqtt"/><text x="7" y="24" class="chip">MQTT</text></svg><span>MQTT_10</span></div>
<div class="item cjk"><svg><use href="#add"/></svg><span>&lt;双击添加&gt;</span></div></div></section>
<section><h2>画面</h2><div class="items">
<div class="item cjk"><div class="thumb"></div><span>主画面</span></div>
<div class="item cjk"><svg><use href="#add"/></svg><span>&lt;双击添加&gt;</span></div></div></section>
<section><h2>任务</h2><div class="items"><div class="item cjk"><svg><use href="#add"/></svg><span>&lt;双击添加&gt;</span></div></div></section>
<section><h2>事件</h2><div class="items"><div class="item cjk"><svg><use href="#add"/></svg><span>&lt;双击添加&gt;</span></div></div></section>
<section><h2>用户组</h2><div class="items">
<div class="item"><svg><use href="#users"/></svg><span>Administra...</span></div>
<div class="item"><svg><use href="#users"/></svg><span>PowerUsers</span></div>
<div class="item"><svg><use href="#users"/></svg><span>Users</span></div>
<div class="item cjk"><svg><use href="#add"/></svg><span>&lt;双击添加&gt;</span></div></div></section>
<section><h2>用户</h2><div class="items">
<div class="item"><svg><use href="#user"/></svg><span>Admin</span></div>
<div class="item"><svg><use href="#user"/></svg><span>PowerUser</span></div>
<div class="item"><svg><use href="#user"/></svg><span>User</span></div>
<div class="item cjk"><svg><use href="#add"/></svg><span>&lt;双击添加&gt;</span></div></div></section>
<section><h2>配方</h2><div class="items"><div class="item cjk"><svg><use href="#add"/></svg><span>&lt;双击添加&gt;</span></div></div></section>
</div>
<div class="scroll"><i></i></div>
</div>
</main>
</div>
</div>
<footer class="status"><span>就绪</span><span class="mark">CSDN @末初mochu7</span></footer>
<div class="desk"></div>
</body>
</html>
```
FILE: styles.css
```css
* { box-sizing: border-box; }
html, body { margin: 0; }
body {
  min-height: 100vh;
  display: flex;
  flex-direction: column;
  overflow-x: hidden;
  background: #f0f0f0;
  color: #000;
  font: 12px/18px "Noto Sans", "Noto Sans CJK SC", sans-serif;
}
button, input, select { font: inherit; color: inherit; }
button { border: 0; padding: 0; background: none; display: flex; align-items: center; }
ul { list-style: none; margin: 0; padding: 0; }
svg { display: block; flex: none; }
.defs { position: absolute; width: 0; height: 0; }
.i { width: 16px; height: 16px; }
.c { width: 8px; height: 8px; }
.x { width: 10px; height: 10px; }
.pin { width: 10px; height: 12px; }

.title { height: 24px; flex: none; display: flex; align-items: center; gap: 4px; padding-left: 3px; background: #fff; white-space: nowrap; }
.menu { height: 24px; flex: none; display: flex; align-items: center; gap: 21px; padding-left: 15px; }

.bars { flex: none; background: #f7f7f7; }
.bar { height: 25px; display: flex; overflow: hidden; }
.group { flex: none; display: flex; align-items: center; padding: 0 4px 2px; border-right: 1px solid #bdbdbd; background: linear-gradient(#fbfbfb, #f2f2f2); }
.group + .group { padding-left: 0; }
.grip { width: 7px; height: 14px; flex: none; background: linear-gradient(#b0b0b0 50%, transparent 50%) 2px 0 / 2px 4px repeat-y; }
.sep { width: 7px; height: 15px; flex: none; background: linear-gradient(#bdbdbd, #bdbdbd) 5px 0 / 1px 15px no-repeat; }
.tb { width: 23px; height: 22px; flex: none; justify-content: center; }
.drop { width: 29px; }
.far { width: 33px; gap: 4px; }
.wide { width: auto; gap: 2px; padding: 0 8px 0 1px; white-space: nowrap; }
.gray .tb { color: #8c8c8c; }
.letter { font: bold 16px/22px "Liberation Serif", serif; }

.combo { position: relative; flex: none; height: 24px; display: flex; align-items: center; border: 1px solid #999; background: #f0f0f0; padding-left: 2px; color: #555; }
.combo select { appearance: none; width: 100%; height: 22px; border: 0; background: none; padding: 0 2px; font-size: 13px; color: #777; }
.combo input { border: 0; padding: 0; height: 18px; background: #fff; }
.combo .c { position: absolute; right: 2px; top: 8px; pointer-events: none; }
.font { width: 150px; margin-right: 3px; }
.font input { width: 128px; font-size: 16px; color: #000; }
.size { width: 119px; }
.size input { width: 15px; background: #0078d7; color: #7a8ea2; font-size: 13px; }
.zoom { width: 120px; margin-right: 5px; }
.flat { border: 0; background: #fff; color: #000; }
.flat select { color: #000; font-size: 12px; }
.device { width: 121px; }
.lang { width: 118px; margin: 0 4px 0 2px; }

.work { flex: 1; display: flex; gap: 6px; }
.side { width: 194px; flex: none; display: flex; flex-direction: column; background: #fff; border: 1px solid #828790; border-top: 0; }
.sidehead { height: 21px; margin: 0 -1px; padding: 0 6px 0 5px; display: flex; align-items: center; gap: 7px; background: #007acc; color: #fff; }
.dots { flex: 1; height: 6px; background: radial-gradient(#5aa8dd 35%, transparent 40%) 0 0 / 3px 3px; }
.tree { padding: 2px 0 0 8px; }
.tree ul { padding-left: 19px; }
.tree li { position: relative; }
.tree ul > li::before { content: ""; position: absolute; left: 4px; top: 0; bottom: 0; width: 1px; background: repeating-linear-gradient(#777 0 1px, transparent 1px 2px); }
.tree ul > li:last-child::before { bottom: auto; height: 10px; }
.row { height: 18px; display: flex; align-items: center; padding-left: 15px; white-space: nowrap; background: repeating-linear-gradient(90deg, #777 0 1px, transparent 1px 2px) 4px 10px / 10px 1px no-repeat; }
.row span { margin-left: 3px; padding: 2px 2px 0 1px; line-height: 16px; }
.row .sel { background: #0078d7; color: #fff; padding: 0 1px 2px; }
.row .latin { padding: 0 2px; font-size: 11px; }
.tg { position: relative; z-index: 1; width: 9px; height: 9px; margin: 2px 6px 0 -15px; border: 1px solid #969696; border-radius: 1px; background: linear-gradient(#3c5aa0, #3c5aa0) 1px 3px / 5px 1px no-repeat, #f6f6f6; }
.more { background: linear-gradient(#3c5aa0, #3c5aa0) 1px 3px / 5px 1px no-repeat, linear-gradient(#3c5aa0, #3c5aa0) 3px 1px / 1px 5px no-repeat, #f6f6f6; }
.aa { font: bold 10px "Liberation Serif", serif; fill: #222; }

.doc { flex: 1; min-width: 0; display: flex; flex-direction: column; }
.tabs { height: 21px; flex: none; border-bottom: 2px solid #007acc; }
.tab { width: 100px; height: 19px; padding: 1px 6px 0 18px; display: flex; align-items: center; justify-content: space-between; background: #007acc; color: #fff; }
.page { flex: 1; display: flex; flex-direction: column; margin-right: 2px; padding: 16px 15px 13px 14px; border-right: 4px solid #f0f0f0; background: #fff; }
.head { display: flex; justify-content: space-between; align-items: flex-start; height: 64px; }
h1 { margin: 0; font: 16px/22px "Liberation Mono", monospace; color: #1c2438; }
.head p { margin: 0; height: 20px; display: flex; align-items: center; gap: 12px; font: 10px/20px "Liberation Mono", monospace; }
.head b { font: 12px/20px "Noto Sans CJK SC", sans-serif; }
.prop { width: 124px; height: 23px; margin-top: 4px; justify-content: center; border: 1px solid #000; }
.box { flex: 1; display: flex; border: 1px solid #828790; padding: 0 1px 1px 0; }
.list { flex: 1; min-width: 0; padding-right: 11px; }
.scroll { width: 16px; margin-top: 1px; padding: 17px 0 40px 7px; background: #f0f0f0; }
.scroll i { display: block; width: 2px; height: 100%; background: #858585; }
section { margin-bottom: 25px; }
section:last-child { margin-bottom: 0; }
h2 { display: flex; align-items: center; gap: 4px; height: 22px; margin: 0 0 4px; padding-left: 13px; font: 12px/22px "Noto Sans CJK SC", sans-serif; color: #003399; }
h2::after { content: ""; flex: 1; height: 1px; background: #b0bfde; }
.items { display: flex; flex-wrap: wrap; }
.item { width: 91px; height: 66px; display: flex; flex-direction: column; align-items: center; font: 10px/20px "Liberation Mono", monospace; }
.item svg, .thumb { width: 48px; height: 48px; }
.thumb { border: 1px solid #d4d4d4; }
.cjk { font: 12px/18px "Noto Sans CJK SC", sans-serif; }
.chip { font: bold 8px "Liberation Sans", sans-serif; fill: #fff; }

.status { height: 23px; flex: none; display: flex; align-items: center; justify-content: space-between; padding: 0 15px 0 4px; border-top: 1px solid #d4d4d4; border-bottom: 1px solid #d4d4d4; }
.mark { font-size: 17px; color: #8a8a8a; text-shadow: 1px 1px 0 #fff; }
.desk { height: 7px; flex: none; background: #dedcde; }
```
